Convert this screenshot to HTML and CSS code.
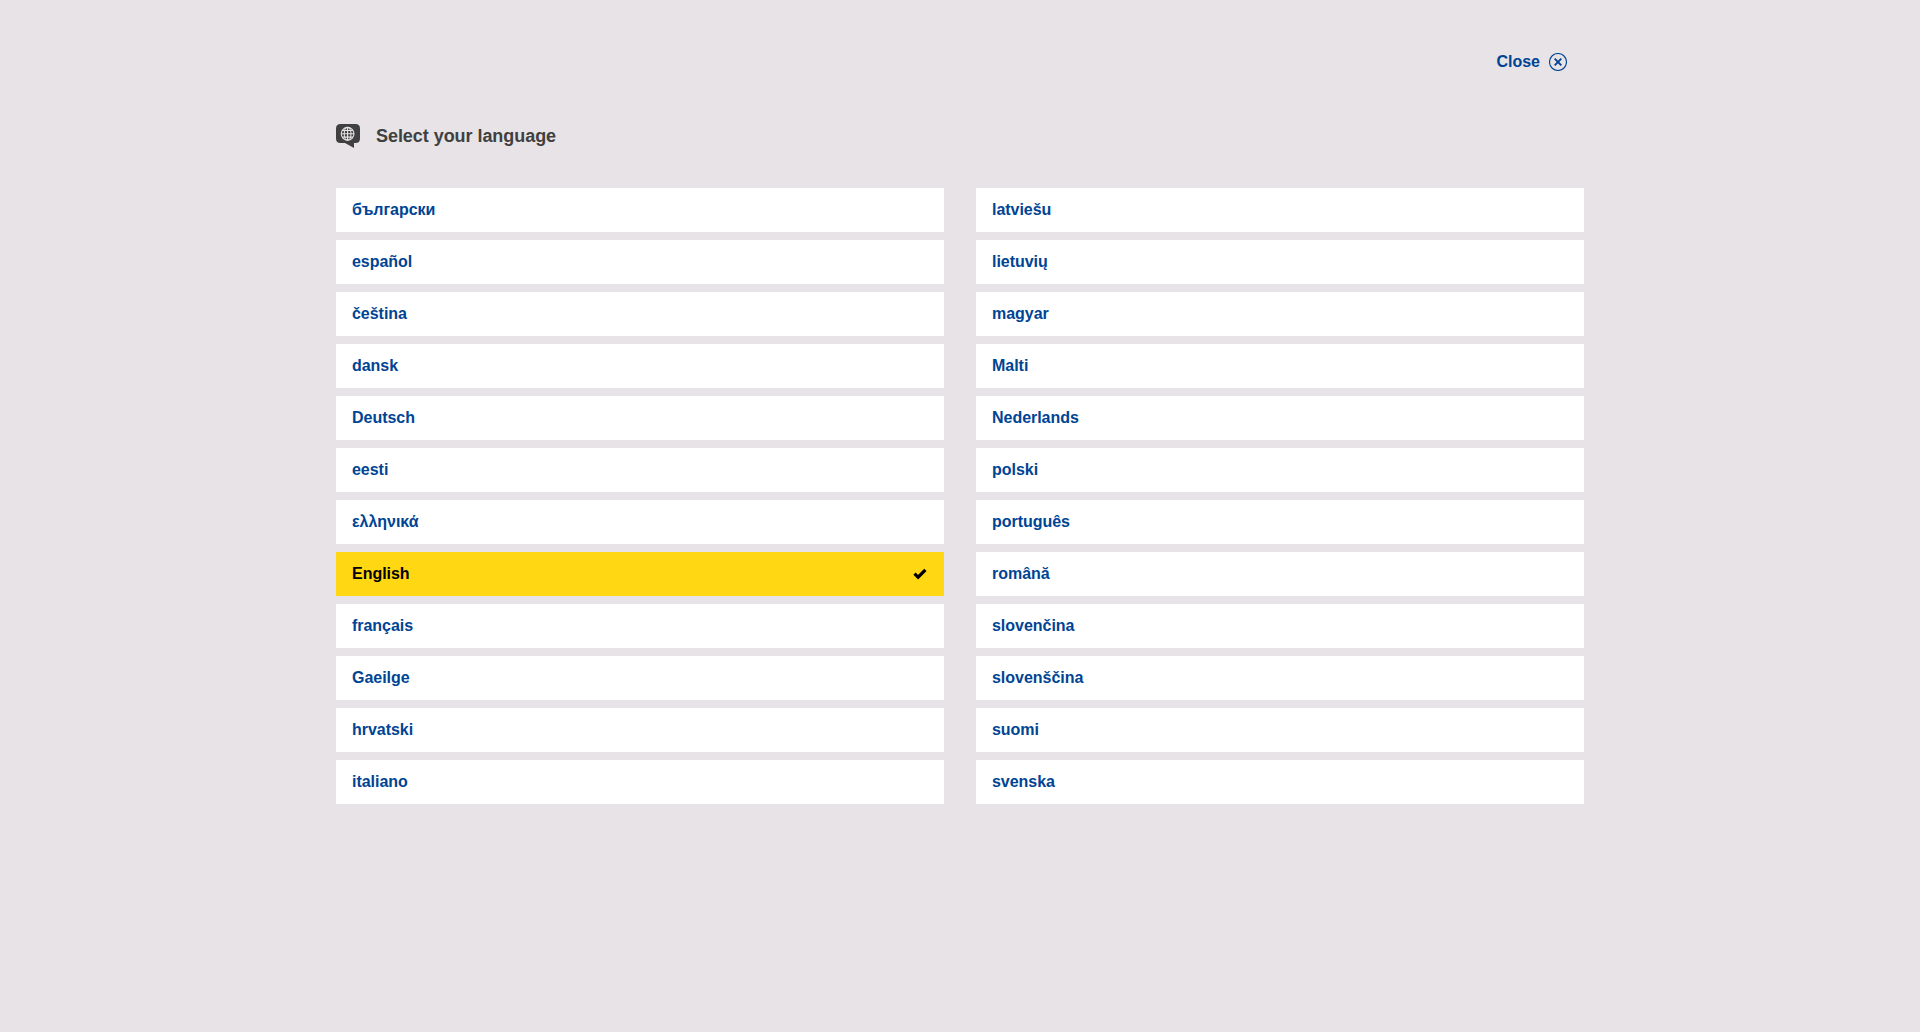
FILE: index.html
```html
<!DOCTYPE html>
<html lang="en">
<head>
<meta charset="utf-8">
<title>Select your language</title>
<link rel="stylesheet" href="styles.css">
</head>
<body>
<main class="page">
  <header class="topbar">
    <a class="close" href="#">Close
      <svg class="close-icon" viewBox="0 0 18 18"><circle cx="9" cy="9" r="8.5"/><path d="M5.7 5.7l6.6 6.6M12.3 5.7l-6.6 6.6"/></svg>
    </a>
  </header>
  <h1 class="title">
    <svg class="title-icon" viewBox="0 0 24 24">
      <path class="bubble" d="M4.500 0h15q4.500 0 4.500 4.500v10q0 4.500-4.500 4.500h-1.500v5l-9-5H4.500q-4.500 0-4.500-4.500V4.500q0-4.500 4.500-4.500z"/>
      <g class="globe"><circle cx="11.6" cy="9.8" r="6.4"/><ellipse cx="11.6" cy="9.8" rx="3.4" ry="6.4"/><path d="M11.6 3.400v12.800M5.200 9.800h12.800M6.300 6.500h10.600M6.300 13.100h10.600"/></g>
    </svg>
    <span>Select your language</span>
  </h1>
  <div class="languages">
    <ul class="list">
      <li><a class="item" href="#" lang="bg">български</a></li>
      <li><a class="item" href="#" lang="es">español</a></li>
      <li><a class="item" href="#" lang="cs">čeština</a></li>
      <li><a class="item" href="#" lang="da">dansk</a></li>
      <li><a class="item" href="#" lang="de">Deutsch</a></li>
      <li><a class="item" href="#" lang="et">eesti</a></li>
      <li><a class="item" href="#" lang="el">ελληνικά</a></li>
      <li><a class="item selected" href="#" lang="en">English
        <svg class="check" viewBox="0 0 14 12"><path d="M1.500 5.700l3.600 3.500 7.300-7.400"/></svg></a></li>
      <li><a class="item" href="#" lang="fr">français</a></li>
      <li><a class="item" href="#" lang="ga">Gaeilge</a></li>
      <li><a class="item" href="#" lang="hr">hrvatski</a></li>
      <li><a class="item" href="#" lang="it">italiano</a></li>
    </ul>
    <ul class="list">
      <li><a class="item" href="#" lang="lv">latviešu</a></li>
      <li><a class="item" href="#" lang="lt">lietuvių</a></li>
      <li><a class="item" href="#" lang="hu">magyar</a></li>
      <li><a class="item" href="#" lang="mt">Malti</a></li>
      <li><a class="item" href="#" lang="nl">Nederlands</a></li>
      <li><a class="item" href="#" lang="pl">polski</a></li>
      <li><a class="item" href="#" lang="pt">português</a></li>
      <li><a class="item" href="#" lang="ro">română</a></li>
      <li><a class="item" href="#" lang="sk">slovenčina</a></li>
      <li><a class="item" href="#" lang="sl">slovenščina</a></li>
      <li><a class="item" href="#" lang="fi">suomi</a></li>
      <li><a class="item" href="#" lang="sv">svenska</a></li>
    </ul>
  </div>
</main>
</body>
</html>
```
FILE: styles.css
```css
* { box-sizing: border-box; }
body {
  margin: 0;
  min-height: 100vh;
  background: #e7e3e6;
  font: bold 16px/24px "Liberation Sans", Arial, sans-serif;
  color: #404040;
}
a { color: #004494; text-decoration: none; }
.page { width: 1248px; margin: 0 auto; padding-top: 50px; }
.topbar { display: flex; justify-content: flex-end; padding-right: 17px; }
.close { display: flex; align-items: center; gap: 9px; letter-spacing: -0.02px; }
.close-icon { width: 18px; height: 18px; fill: none; stroke: #004494; stroke-width: 1.1; }
.close-icon path { stroke-width: 1.9; }
.title {
  display: flex;
  align-items: center;
  gap: 16px;
  margin: 50px 0 40px;
  font-size: 18px;
  line-height: 24px;
  letter-spacing: -0.05px;
}
.title-icon { width: 24px; height: 24px; }
.bubble { fill: #404040; }
.globe { fill: none; stroke: #e7e3e6; stroke-width: 1.1; }
.languages { display: grid; grid-template-columns: 1fr 1fr; gap: 32px; }
.list { display: grid; gap: 8px; margin: 0; padding: 0; list-style: none; }
.item {
  display: flex;
  align-items: center;
  justify-content: space-between;
  height: 44px;
  padding: 0 17px 0 16px;
  background: #fff;
  letter-spacing: -0.03px;
}
.selected { background: #ffd712; color: #000; }
.check { width: 14px; height: 12px; fill: none; stroke: #000; stroke-width: 3.2; }
```
